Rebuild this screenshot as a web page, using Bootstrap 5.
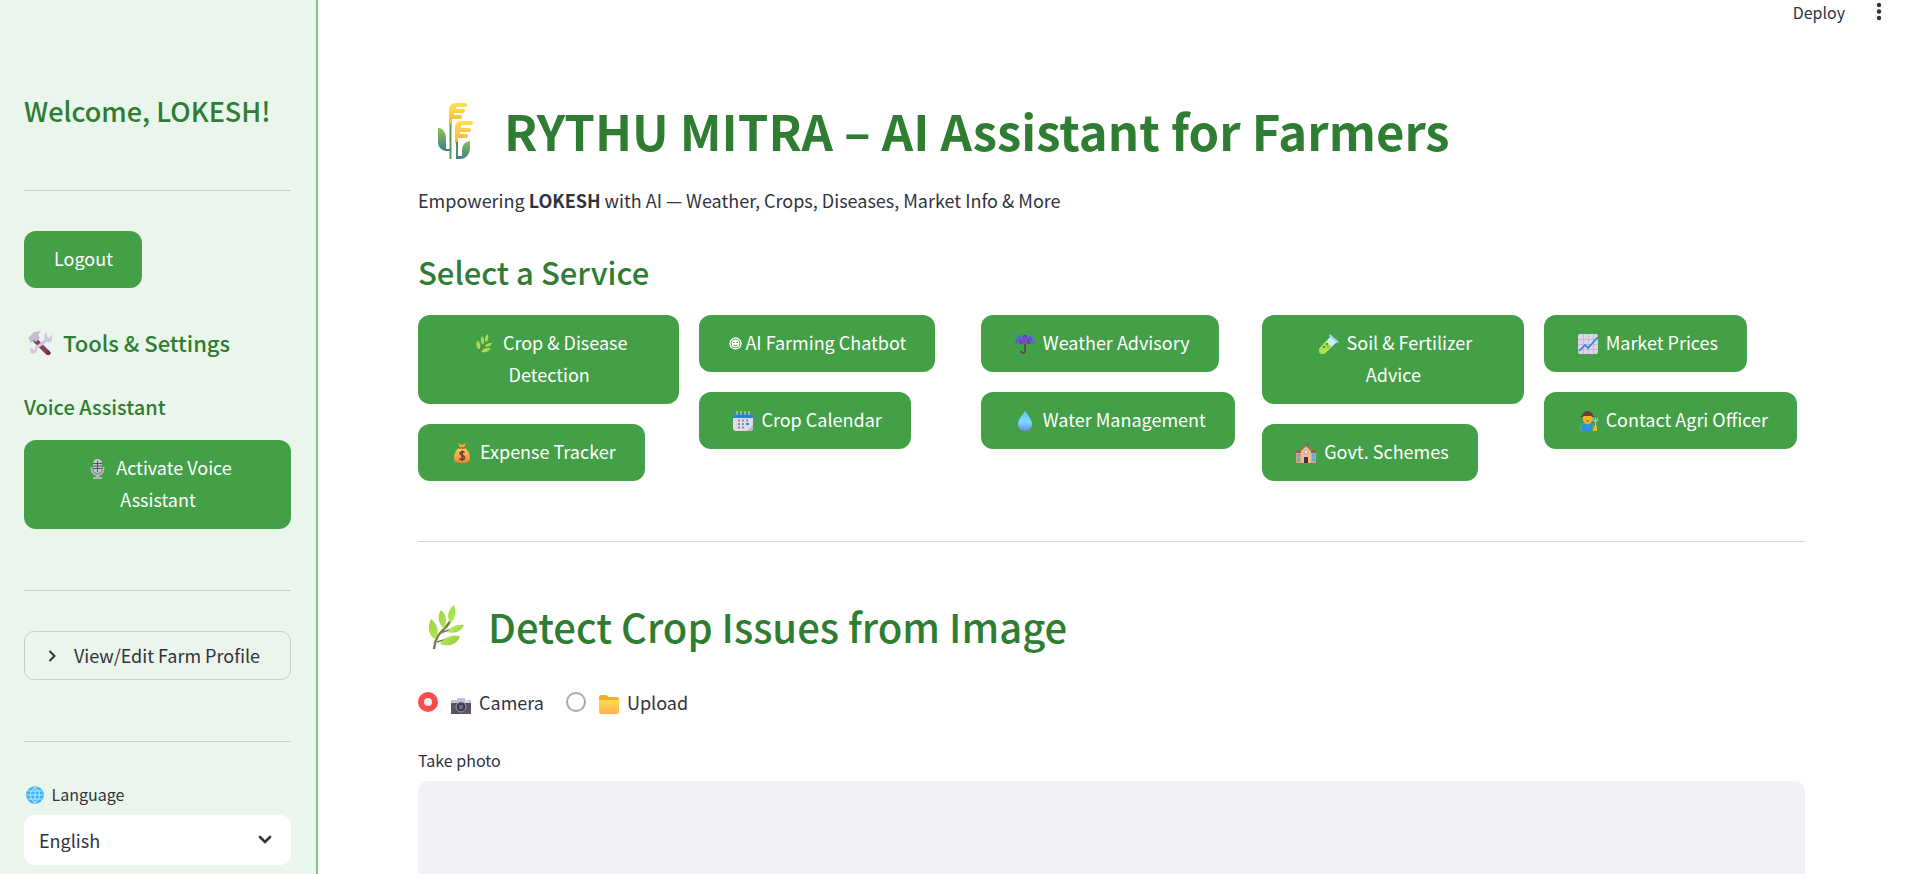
<!DOCTYPE html>
<html lang="en">
<head>
<meta charset="utf-8">
<meta name="viewport" content="width=device-width, initial-scale=1">
<title>Rythu Mitra</title>
<link href="https://cdn.jsdelivr.net/npm/bootstrap@5.3.0/dist/css/bootstrap.min.css" rel="stylesheet">
<style>
:root { --leaf: #2e7d32; --btn: #43a047; --ink: #31333f; }
body { font-family: "Noto Sans CJK SC", "Noto Sans", sans-serif; font-size: 18px; line-height: 32px; color: var(--ink); background: #fff; }
h1, h2, h3, h4, h5 { color: var(--leaf); font-weight: 500; margin: 0; }
h1 { font-size: 49px; line-height: 60px; font-weight: 700; }
h2 { font-size: 40px; line-height: 48px; }
h3 { font-size: 31px; line-height: 40px; }
.side-title { font-size: 27px; line-height: 36px; }
.side-head { font-size: 22px; line-height: 30px; margin: 39px 0 36px; }
.side-sub { font-size: 20px; line-height: 28px; margin-bottom: 19px; }
.sidebar { width: 318px; padding: 93px 25px 8px 24px; background: #eaf5eb; border-right: 2px solid #81c784; overflow-y: auto; scrollbar-width: none; }
.content-pane { overflow-y: auto; scrollbar-width: none; }
.sidebar::-webkit-scrollbar, .content-pane::-webkit-scrollbar { display: none; }
.page-body { padding: 76px 103px 40px 100px; }
.topbar { height: 24px; padding-right: 26px; gap: 31px; }
.topbar button { color: var(--ink); line-height: 24px; }
hr { margin: 61px 0 40px; border-top: 1px solid #31333f; opacity: .2; }
.page-body hr { margin: 60px 0; }
.btn-farm { --bs-btn-color: #fff; --bs-btn-bg: var(--btn); --bs-btn-hover-color: #fff; --bs-btn-hover-bg: #388e3c; --bs-btn-active-color: #fff; --bs-btn-active-bg: #2e7d32;
  border: 0; border-radius: 12px; padding: 11px 29px 14px 30px; font-size: 18px; line-height: 32px; max-width: 100%; }
.services { display: grid; grid-template-columns: repeat(5, minmax(0, 1fr)); gap: 20px; margin-top: 23px; }
.services > div { display: flex; flex-direction: column; align-items: flex-start; gap: 20px; }
.em { width: 20px; height: 20px; margin: 0 4px; vertical-align: -4px; }
.em-bot { width: 13px; height: 13px; margin-right: 3px; vertical-align: 0; }
.em-tools { width: 24px; height: 24px; margin: 0 6px 0 4px; vertical-align: -3px; }
.em-globe { width: 18px; height: 18px; margin: 0 4px 0 2px; vertical-align: -3px; }
.em-wheat { width: 36px; height: 56px; margin: 0 30px 0 20px; vertical-align: -8px; }
.em-leaf { width: 44px; height: 44px; margin: 0 9px 0 8px; vertical-align: -6px; }
.expander { border: 1px solid #c4d0c7; border-radius: 10px; }
.expander summary { list-style: none; display: flex; align-items: center; gap: 17px; padding: 7px 22px; line-height: 33px; white-space: nowrap; }
.expander summary svg { width: 10px; height: 14px; flex: none; }
.label-sm { font-size: 16px; line-height: 24px; margin-bottom: 9px; display: block; }
.lang-select { height: 50px; border: 0; border-radius: 10px; padding: 0 48px 0 15px; font-size: 18px; color: var(--ink); background-color: #fff; background-position: right 19px center; background-size: 14px 10px;
  background-image: url("data:image/svg+xml,%3Csvg xmlns='http://www.w3.org/2000/svg' viewBox='0 0 14 10'%3E%3Cpath d='M2 2l5 5 5-5' fill='none' stroke='%2331333f' stroke-width='2.6' stroke-linecap='round'/%3E%3C/svg%3E"); }
.radio-dot { appearance: none; width: 20px; height: 20px; margin: 0 10px 0 0; border-radius: 50%; border: 2px solid #a9aab0; background: #fff; flex: none; }
.radio-dot:checked { border: 6px solid #ff4b4b; background: #f0f2f6; }
.radios { gap: 22px; margin: 36px 0 30px; }
.radios .em { margin-left: 3px; }
.camera-box { height: 420px; background: #f0f2f6; border-radius: 10px; }
.intro { margin: 24px 0 36px; }
.intro b { font-weight: 700; }
</style>
</head>
<body>
<svg class="position-absolute" width="0" height="0" aria-hidden="true">
  <defs>
    <linearGradient id="gLeaf" x1="0" y1="0" x2="1" y2="1"><stop offset="0" stop-color="#8fcf3c"/><stop offset=".6" stop-color="#b5e655"/><stop offset="1" stop-color="#8cc63e"/></linearGradient>
    <linearGradient id="gStem" x1="0" y1="0" x2="0" y2="1"><stop offset="0" stop-color="#8bc34a"/><stop offset="1" stop-color="#3c7f8f"/></linearGradient>
    <linearGradient id="gEar" x1="0" y1="0" x2="0" y2="1"><stop offset="0" stop-color="#ffe04f"/><stop offset="1" stop-color="#ffb13b"/></linearGradient>
    <linearGradient id="gDrop" x1="0" y1="0" x2="0" y2="1"><stop offset="0" stop-color="#5fc3f7"/><stop offset=".55" stop-color="#7ad9ff"/><stop offset="1" stop-color="#6f86ff"/></linearGradient>
    <linearGradient id="gBag" x1="0" y1="0" x2="0" y2="1"><stop offset="0" stop-color="#ffcf4b"/><stop offset="1" stop-color="#ee8336"/></linearGradient>
    <linearGradient id="gFold" x1="0" y1="0" x2="0" y2="1"><stop offset="0" stop-color="#ffdb4d"/><stop offset="1" stop-color="#ffb14e"/></linearGradient>
    <symbol id="leaf" viewBox="0 0 44 44">
      <path d="M8 44C9 33 13 29 18 24S25 15 26 12" fill="none" stroke="#6c7f4b" stroke-width="2.4"/>
      <path d="M14 28L26 24M11 37L21 34" fill="none" stroke="#6c7f4b" stroke-width="1.6"/>
      <path d="M28 0C21 6 21 12 24 18C29 14 31 8 28 0ZM15 5C11 11 12 18 18 24C22 16 20 9 15 5ZM5 14C1 22 3 31 9 34C14 28 12 19 5 14ZM38 20C30 19 25 22 21 27C29 29 35 27 38 20ZM34 31C25 29 18 33 14 39C23 42 31 40 34 31Z" fill="url(#gLeaf)"/>
    </symbol>
  </defs>
</svg>

<div class="d-flex vh-100">
  <aside class="sidebar flex-shrink-0">
    <h2 class="side-title text-nowrap">Welcome, LOKESH!</h2>
    <hr>
    <button type="button" class="btn btn-farm">Logout</button>
    <h3 class="side-head"><svg class="em-tools" viewBox="0 0 24 24" aria-hidden="true"><path d="M7 9L20 22" stroke="#81405d" stroke-width="4.600" stroke-linecap="round"/><path d="M19 20L22 23" stroke="#65304f" stroke-width="3"/><path d="M3 22a4 4 0 0 1 1-6l1 3 2 0 0-3L17 8a5 5 0 0 1 2-7l0 5 3 1 2-4a5 5 0 0 1-5 8L9 18a4 4 0 0 1-6 4Z" fill="#d3c6e0"/><path d="M0 7L6 1L13 0L10 4L12 7L8 11L5 9L3 12Z" fill="#c6bdd2"/></svg> Tools &amp; Settings</h3>
    <h4 class="side-sub">Voice Assistant</h4>
    <button type="button" class="btn btn-farm w-100"><svg class="em" viewBox="0 0 20 20" aria-hidden="true"><rect x="5" y="0" width="9" height="14" rx="4.500" fill="#c9c2d3"/><path d="M5 4.500H14M5 7H14M5 9.500H14M9.500 2V13" stroke="#5a5068" stroke-width="1"/><path d="M3.500 8v2a6 6 0 0 0 12 0V8" fill="none" stroke="#b8b0c3" stroke-width="1.800"/><path d="M8 16h3v2h3v2H5v-2h3Z" fill="#bab3c4"/></svg> Activate Voice Assistant</button>
    <hr>
    <details class="expander">
      <summary><svg viewBox="0 0 10 14" aria-hidden="true"><path d="M2.500 2l5 5-5 5" fill="none" stroke="#31333f" stroke-width="2"/></svg>View/Edit Farm Profile</summary>
    </details>
    <hr>
    <label class="label-sm" for="lang"><svg class="em-globe" viewBox="0 0 18 18" aria-hidden="true"><circle cx="9" cy="9" r="8.800" fill="#3fb1f5"/><path d="M1 9H17M2 5H16M2 13H16M9 1V17M9 1C3 5 3 13 9 17C15 13 15 5 9 1" fill="none" stroke="#b9ecff" stroke-width="1"/></svg> Language</label>
    <select id="lang" class="form-select lang-select"><option>English</option></select>
  </aside>

  <div class="content-pane flex-grow-1">
    <header class="topbar d-flex justify-content-end align-items-center">
      <button type="button" class="btn border-0 p-0">Deploy</button>
      <button type="button" class="btn border-0 p-0 d-flex" aria-label="Menu"><svg width="6" height="20" viewBox="0 0 6 20" fill="#31333f"><circle cx="3" cy="3" r="2.200"/><circle cx="3" cy="9.500" r="2.200"/><circle cx="3" cy="16" r="2.200"/></svg></button>
    </header>

    <main class="page-body">
      <h1><svg class="em-wheat" viewBox="0 0 36 56" aria-hidden="true"><path d="M11.500 20h2v36h-2Z" fill="#5b9a62"/><path d="M18 38h2v17h-2Z" fill="#4f8f70"/><path d="M0 25C5 25 8 30 8 35V46H12V48H8C3 47 0 44 0 39Z" fill="url(#gStem)"/><path d="M32 38C26 39 24 43 24 48V53H18V56H22C29 56 32 50 32 44Z" fill="url(#gStem)"/><path d="M11 22V8Q11 0 18 0H27Q29 0 29 2T27 4H18V6H25Q27 6 27 8T25 10H16V12H22Q24 12 24 14T22 16H14V20Z" fill="url(#gEar)"/><path d="M17 40V26Q17 18 23 18H33Q35 18 35 20T33 22H23V25H31Q33 25 33 27T31 29H22V31H28Q30 31 30 33T28 35H20V38Z" fill="url(#gEar)"/></svg>RYTHU MITRA – AI Assistant for Farmers</h1>
      <p class="intro">Empowering <b>LOKESH</b> with AI — Weather, Crops, Diseases, Market Info &amp; More</p>
      <h3>Select a Service</h3>

      <div class="services">
        <div>
          <button type="button" class="btn btn-farm"><svg class="em" aria-hidden="true"><use href="#leaf"/></svg> Crop &amp; Disease Detection</button>
          <button type="button" class="btn btn-farm"><svg class="em" viewBox="0 0 20 20" aria-hidden="true"><path d="M6 0l4 2 4-2-2 5H8Z" fill="#f5a83c"/><path d="M7 5h6c4 3 5 7 5 10 0 4-3 5-8 5s-8-1-8-5c0-3 1-7 5-10Z" fill="url(#gBag)"/><path d="M7 5H13" stroke="#b9542f" stroke-width="1.500"/><path d="M12.500 9.500C11 8 8 8.500 8 10.500s4.500 1.500 4.500 4-3.500 2.500-5 1M10.200 7.500V18" fill="none" stroke="#6b3b3b" stroke-width="1.500"/></svg> Expense Tracker</button>
        </div>
        <div>
          <button type="button" class="btn btn-farm"><svg class="em-bot" viewBox="0 0 13 13" aria-hidden="true"><circle cx="6.500" cy="6.500" r="5.500" fill="none" stroke="#fff" stroke-width="1.300"/><circle cx="6.500" cy="6.500" r="3.900" fill="#fff"/><path d="M4 5.500H5.500M7.500 5.500H9M4.500 8Q6.500 9.500 8.500 8" fill="none" stroke="#43a047" stroke-width="1"/></svg>AI Farming Chatbot</button>
          <button type="button" class="btn btn-farm"><svg class="em" viewBox="0 0 20 20" aria-hidden="true"><rect x="0" y="2" width="20" height="18" rx="3" fill="#e0daea"/><path d="M0 7V5a3 3 0 0 1 3-3h14a3 3 0 0 1 3 3v2Z" fill="#2f7fd3"/><path d="M4 0v4M8 0v4M12 0v4M16 0v4" stroke="#c9d3ea" stroke-width="1.200"/><path d="M5 9.500h2M9 9.500h2M13 9.500h2M5 13h2M9 13h2M5 16.500h2M9 16.500h2" stroke="#8d8a9c" stroke-width="2"/><path d="M13 13h3" stroke="#2d8ae0" stroke-width="2.200"/><path d="M14 20l6-6v3a3 3 0 0 1-3 3Z" fill="#bfb4d0"/></svg> Crop Calendar</button>
        </div>
        <div>
          <button type="button" class="btn btn-farm"><svg class="em" viewBox="0 0 20 20" aria-hidden="true"><path d="M10 8v9q0 2-2 2t-2-2" fill="none" stroke="#5b4048" stroke-width="1.600"/><path d="M0 10C1 4 5 1 10 1s9 3 10 9q-3-1-5 0.500-2-1.500-5 0-3-1.500-5 0-2-1.500-5-0.500Z" fill="#7a4fb5"/><path d="M10 1C7 4 6 7 6 10M10 1c3 3 4 6 4 9" fill="none" stroke="#5e3a97" stroke-width="1"/><path d="M2 1v3M7 3v2M13 2v2M18 3v3M3 8v2M17 8v1" stroke="#3f7cf0" stroke-width="1.800" stroke-linecap="round"/></svg> Weather Advisory</button>
          <button type="button" class="btn btn-farm"><svg class="em" viewBox="0 0 20 20" aria-hidden="true"><path d="M10 0C13 4 17 9 17 13a7 7 0 0 1-14 0C3 9 7 4 10 0Z" fill="url(#gDrop)"/></svg> Water Management</button>
        </div>
        <div>
          <button type="button" class="btn btn-farm"><svg class="em" viewBox="0 0 20 20" aria-hidden="true"><path d="M12 2l6 6L6 19a3.500 3.500 0 0 1-5-5Z" fill="#cfeef3"/><path d="M6 8l7 4-7 7a3.500 3.500 0 0 1-5-5Z" fill="#a9e34b"/><path d="M11 0L20 8L18 9L10 2Z" fill="#a5d5f2"/><circle cx="8" cy="10" r="1.200" fill="#4f9a1e"/><circle cx="5" cy="13" r="1.200" fill="#4f9a1e"/><circle cx="9" cy="13" r=".8" fill="#4f9a1e"/></svg> Soil &amp; Fertilizer Advice</button>
          <button type="button" class="btn btn-farm"><svg class="em" viewBox="0 0 20 20" aria-hidden="true"><path d="M10 0v4M10 .5l3 1-3 1" fill="#3aa655" stroke="#5b6b55" stroke-width=".8"/><path d="M0 9h20v11H0Z" fill="#dfa37c"/><path d="M0 7h20v3H0Z" fill="#9a5b4e"/><path d="M5 8l5-5 5 5v12H5Z" fill="#f2bd8c"/><path d="M4 8l6-6 6 6" fill="none" stroke="#a8695a" stroke-width="1.400"/><circle cx="10" cy="9" r="2" fill="#e9e4f3" stroke="#8b7f9c" stroke-width=".6"/><path d="M8 14h4v6H8Z" fill="#4a2f3c"/><path d="M1 11h3v3H1ZM16 11h3v3h-3ZM1 15h3v3H1ZM16 15h3v3h-3Z" fill="#49b5ee"/></svg> Govt. Schemes</button>
        </div>
        <div>
          <button type="button" class="btn btn-farm"><svg class="em" viewBox="0 0 20 20" aria-hidden="true"><rect width="20" height="20" rx="2" fill="#ded5e6"/><path d="M0 5.500H20M0 10.500H20M0 15.500H20M5.500 0V20M10.500 0V20M15.500 0V20" stroke="#c3b6d0" stroke-width=".9"/><path d="M1 17l6-6 3 3L20 3" fill="none" stroke="#2d86d8" stroke-width="1.700"/></svg> Market Prices</button>
          <button type="button" class="btn btn-farm"><svg class="em" viewBox="0 0 20 20" aria-hidden="true"><path d="M1 20v-3q0-4 4-5h8q3 1 4 4v4Z" fill="#45a878"/><path d="M5 13h2l3 2 2-2h2v7H4v-4Z" fill="#2c8ee8"/><path d="M5 5h9v4q-1 4-4.500 4T5 9Z" fill="#f8b52c"/><path d="M2 6q2-1 3-4 4-4 9 0 1 3 3 4-2 1-4-1H6Q4 7 2 6Z" fill="#6f3d38"/><path d="M8 10h3" stroke="#b54a2c" stroke-width="1"/><path d="M17.500 7v12M15 6v3q2.500 2.500 5 0V6" fill="none" stroke="#c5b9d2" stroke-width="1.200"/><path d="M16 15h3v5h-4Z" fill="#f8b52c"/></svg> Contact Agri Officer</button>
        </div>
      </div>

      <hr>

      <h2><svg class="em-leaf" aria-hidden="true"><use href="#leaf"/></svg> Detect Crop Issues from Image</h2>

      <div class="radios d-flex">
        <label class="d-flex align-items-center" for="src-camera"><input class="radio-dot" type="radio" name="src" id="src-camera" checked><span><svg class="em" viewBox="0 0 20 20" aria-hidden="true"><path d="M6 6l1-2h6l1 2h6v14H0V6Z" fill="#5c5266"/><path d="M0 6h6l1-2h6l1 2h6v3H0Z" fill="#c5bdd0"/><circle cx="10" cy="13" r="5" fill="#3f374b" stroke="#a79db5" stroke-width="1"/><circle cx="10" cy="13" r="2.200" fill="#77698d"/><path d="M14 7.500h4" stroke="#efe9f5" stroke-width="1.500"/></svg> Camera</span></label>
        <label class="d-flex align-items-center" for="src-upload"><input class="radio-dot" type="radio" name="src" id="src-upload"><span><svg class="em" viewBox="0 0 20 20" aria-hidden="true"><path d="M0 3q0-2 2-2h5l3 2h8q2 0 2 2v13H0Z" fill="#f5ab2e"/><path d="M0 6h20v12q0 2-2 2H2q-2 0-2-2Z" fill="url(#gFold)"/></svg> Upload</span></label>
      </div>

      <div class="label-sm" id="photo-label">Take photo</div>
      <div class="camera-box" role="group" aria-labelledby="photo-label"></div>
    </main>
  </div>
</div>
<script src="https://cdn.jsdelivr.net/npm/bootstrap@5.3.0/dist/js/bootstrap.bundle.min.js"></script>
</body>
</html>
